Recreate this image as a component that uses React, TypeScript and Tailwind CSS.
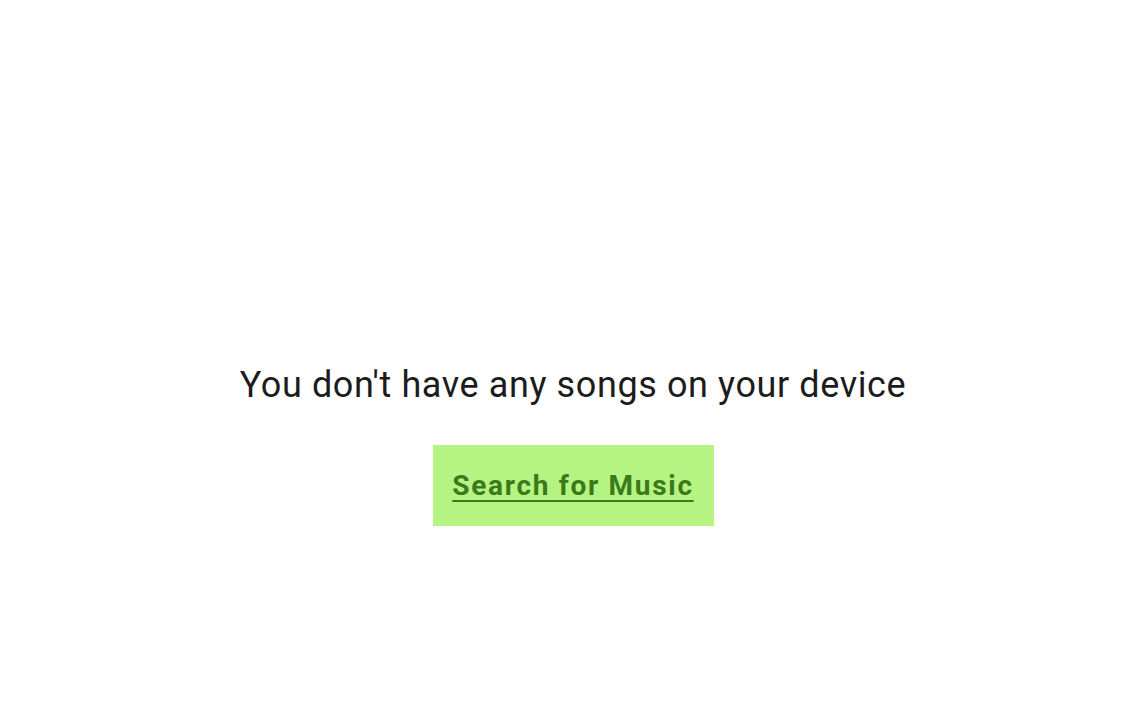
export default function App() {
  return (
    <main className="h-[716px] w-full bg-white flex flex-col items-center font-['Roboto',sans-serif]">
      <p className="mt-[365px] text-[36px] leading-[40px] text-[#1c1c1c] tracking-[0.6px]">
        You don&apos;t have any songs on your device
      </p>
      <button className="mt-[40px] w-[281px] h-[81px] bg-[#b5f482] flex items-center justify-center">
        <span className="text-[28px] leading-none font-bold text-[#3a7a1a] tracking-[1.7px] underline underline-offset-[5px] decoration-2">
          Search for Music
        </span>
      </button>
    </main>
  );
}
